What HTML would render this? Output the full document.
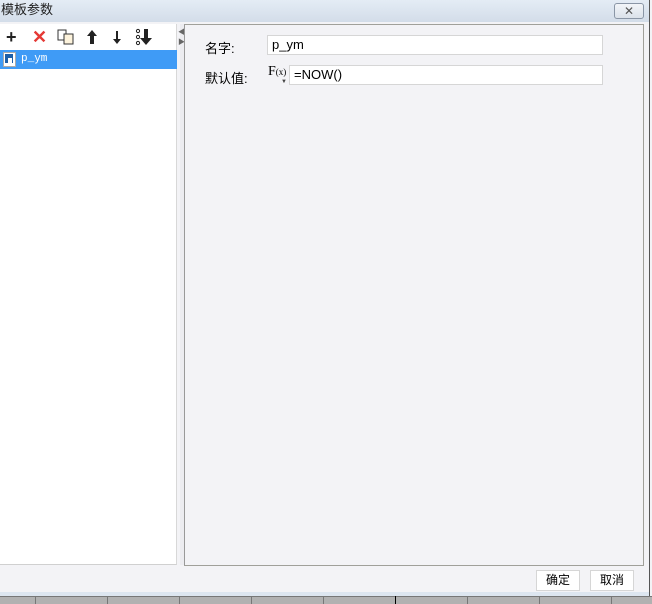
<!DOCTYPE html>
<html><head><meta charset="utf-8"><style>
*{margin:0;padding:0;box-sizing:border-box}
body{width:652px;height:604px;overflow:hidden;background:#f3f3f6;position:relative;font-family:"Liberation Sans","Noto Sans CJK SC",sans-serif;font-size:12px;color:#000}
.a{position:absolute}
.title{left:0;top:0;width:649px;height:22px;background:linear-gradient(#e4ecf5,#d3dde9);font-size:13px;color:#222;line-height:20px;padding-left:1px}
.close{left:614px;top:3px;width:30px;height:16px;border:1px solid #8a96a6;border-radius:3px;background:linear-gradient(#f2f5f9,#dbe2ea);text-align:center;font-size:12px;line-height:14px;color:#555}
.left{left:0;top:24px;width:177px;height:541px;background:#fff;border-right:1px solid #d8d8d8;border-bottom:1px solid #d0d0d0}
.sel{left:0;top:50px;width:177px;height:19px;background:#3f9bf6}
.right{left:184px;top:24px;width:460px;height:542px;border:1px solid #a0a09a;border-left:1px solid #999;background:#f3f3f6}
.inp{background:#fff;border:1px solid #d6d6d6;height:20px;line-height:18px;padding-left:4px;font-size:13px}
.btn{top:570px;width:44px;height:21px;background:#fff;border:1px solid #d6d6d6;text-align:center;line-height:19px;font-size:12px}
.strip{left:0;top:596px;width:652px;height:8px;background:#b1b1b1;border-top:1px solid #777}
.tb{top:28px;font-size:18px;line-height:18px;font-weight:bold}
</style></head><body>
<div class="a title">模板参数</div>
<div class="a close">✕</div>
<div class="a" style="left:649px;top:0;width:1px;height:596px;background:#555"></div>
<div class="a" style="left:0;top:592px;width:649px;height:4px;background:#dde6f0"></div>
<div class="a left"></div>
<div class="a" style="left:180px;top:24px;width:4px;height:541px;background:#ececf0"></div>
<div class="a" style="left:178px;top:28px;font-size:7px;color:#666;line-height:10px">◀<br>▶</div>
<div class="a tb" style="left:6px;color:#222">+</div>
<div class="a tb" style="left:32px;color:#e53935">✕</div>
<svg class="a" style="left:57px;top:29px" width="18" height="16"><rect x="1" y="1" width="8" height="10" fill="#fff" stroke="#333"/><rect x="7" y="5" width="9" height="10" fill="#fdf3dc" stroke="#333"/></svg>
<svg class="a" style="left:86px;top:29px" width="12" height="16"><path d="M6 1L1 7H4V15H8V7H11Z" fill="#222"/></svg>
<svg class="a" style="left:111px;top:29px" width="12" height="16"><path d="M5 2H7V10H10L6 15L2 10H5Z" fill="#222"/></svg>
<svg class="a" style="left:135px;top:28px" width="18" height="18"><circle cx="3" cy="3" r="1.6" fill="none" stroke="#222"/><circle cx="3" cy="9" r="1.6" fill="none" stroke="#222"/><circle cx="3" cy="15" r="1.6" fill="none" stroke="#222"/><path d="M9 1H13V10H17L11 17L5 10H9Z" fill="#222"/></svg>
<div class="a sel"></div>
<svg class="a" style="left:3px;top:52px" width="13" height="15"><rect x="0.5" y="0.5" width="12" height="14" fill="#fff" stroke="#aaa"/><rect x="2" y="2" width="8" height="9" fill="#1d5fa8"/><rect x="5" y="6" width="4" height="7" fill="#fff"/></svg>
<div class="a" style="left:21px;top:53px;color:#fff;font-family:'Liberation Mono',monospace;font-size:11px">p_ym</div>
<div class="a right"></div>
<div class="a" style="left:205px;top:38px;font-size:13px">名字:</div>
<div class="a inp" style="left:267px;top:35px;width:336px">p_ym</div>
<div class="a" style="left:205px;top:68px;font-size:13px">默认值:</div>
<div class="a" style="left:268px;top:64px;font-family:'Liberation Serif',serif;font-size:14px">F<span style="font-size:9px">(x)</span></div>
<div class="a" style="left:281px;top:79px;font-size:6px;color:#444">▼</div>
<div class="a inp" style="left:289px;top:65px;width:314px">=NOW()</div>
<div class="a btn" style="left:536px">确定</div>
<div class="a btn" style="left:590px">取消</div>
<div class="a strip"></div>
<div class="a" style="left:35px;top:597px;width:1px;height:7px;background:#777"></div>
<div class="a" style="left:107px;top:597px;width:1px;height:7px;background:#777"></div>
<div class="a" style="left:179px;top:597px;width:1px;height:7px;background:#777"></div>
<div class="a" style="left:251px;top:597px;width:1px;height:7px;background:#777"></div>
<div class="a" style="left:323px;top:597px;width:1px;height:7px;background:#777"></div>
<div class="a" style="left:395px;top:596px;width:1px;height:8px;background:#000"></div>
<div class="a" style="left:467px;top:597px;width:1px;height:7px;background:#777"></div>
<div class="a" style="left:539px;top:597px;width:1px;height:7px;background:#777"></div>
<div class="a" style="left:611px;top:597px;width:1px;height:7px;background:#777"></div>
</body></html>
